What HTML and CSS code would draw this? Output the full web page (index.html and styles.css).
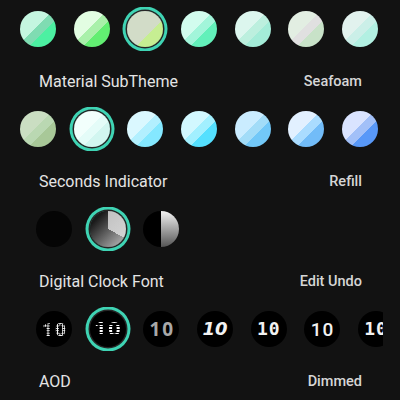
FILE: index.html
```html
<!DOCTYPE html>
<html lang="en">
<head>
    <meta charset="UTF-8">
    <meta name="viewport" content="width=device-width, initial-scale=1.0">
    <title>Watch Face Settings</title>
    <link rel="stylesheet" href="styles.css">
</head>
<body>

<div id="settings">
    <div class="section">
        <div class="swatches">
            <span class="swatch" style="--a:#c4f6e0;--b:#7fdcb2;--c:#4cf0a2"></span>
            <span class="swatch" style="--a:#e2fde2;--b:#a9f0aa;--c:#62ee72"></span>
            <span class="swatch selected" style="--a:#d2dcc8;--b:#d2dcc8;--c:#c6ee92"></span>
            <span class="swatch" style="--a:#d2fcee;--b:#a2f5da;--c:#62f0ba"></span>
            <span class="swatch" style="--a:#dcf6ee;--b:#bcefde;--c:#a4ecd8"></span>
            <span class="swatch" style="--a:#e2eee2;--b:#e0e0e0;--c:#c8e2c8"></span>
            <span class="swatch" style="--a:#e2f2ee;--b:#cbefe8;--c:#b2f0e2"></span>
        </div>
        <div class="row">
            <span class="label">Material SubTheme</span>
            <span class="value">Seafoam</span>
        </div>
    </div>

    <div class="section">
        <div class="swatches">
            <span class="swatch" style="--a:#cadec2;--b:#bad8b2;--c:#a8c898"></span>
            <span class="swatch selected" style="--a:#f2fffc;--b:#e4fcf8;--c:#d2f6f0"></span>
            <span class="swatch" style="--a:#daf8ff;--b:#b2f0ff;--c:#84e8ff"></span>
            <span class="swatch" style="--a:#d2f8ff;--b:#a2f0ff;--c:#54e0ff"></span>
            <span class="swatch" style="--a:#caecff;--b:#a2dcf8;--c:#72c8f8"></span>
            <span class="swatch" style="--a:#e2f0ff;--b:#aadcff;--c:#72bcf8"></span>
            <span class="swatch" style="--a:#dae4ff;--b:#a2c0f8;--c:#5898f8"></span>
        </div>
        <div class="row">
            <span class="label">Seconds Indicator</span>
            <span class="value">Refill</span>
        </div>
    </div>

    <div class="section">
        <div class="swatches inset">
            <span class="dial dial-none"></span>
            <span class="dial dial-sweep selected"></span>
            <span class="dial dial-half"></span>
        </div>
        <div class="row">
            <span class="label">Digital Clock Font</span>
            <span class="value">Edit Undo</span>
        </div>
    </div>

    <div class="section">
        <div class="swatches inset">
            <span class="dial"><b class="num num-dots">10</b></span>
            <span class="dial selected"><b class="num num-lines">10</b></span>
            <span class="dial"><b class="num num-grey">10</b></span>
            <span class="dial"><b class="num num-italic">10</b></span>
            <span class="dial"><b class="num num-mono">10</b></span>
            <span class="dial"><b class="num num-plain">10</b></span>
            <span class="dial"><b class="num num-mono">10</b></span>
        </div>
        <div class="row">
            <span class="label">AOD</span>
            <span class="value">Dimmed</span>
        </div>
    </div>
</div>

</body>
</html>
```

FILE: styles.css
```css
body {
    margin: 0;
    background-color: #121212;
    font-family: Roboto, "Noto Sans", sans-serif;
}

#settings {
    padding-top: 7px;
}

.section {
    height: 100px;
}

.swatches {
    display: flex;
    align-items: center;
    gap: 17.7px;
    height: 44px;
    padding-left: 20px;
    overflow: hidden;
}

.swatches.inset {
    padding-left: 36px;
    margin-right: 17px;
}

.swatch, .dial {
    flex: 0 0 36px;
    width: 36px;
    height: 36px;
    border-radius: 50%;
}

.swatch {
    background: linear-gradient(135deg, var(--a) 0 45%, var(--b) 45% 62%, var(--c) 62%);
}

.selected {
    box-shadow: 0 0 0 1.5px #262626, 0 0 0 4.5px #3fd4b4;
}

.dial {
    display: flex;
    align-items: center;
    justify-content: center;
    background-color: #000;
    overflow: hidden;
}

.dial-none {
    background-color: #050505;
}

.dial-sweep {
    background:
        conic-gradient(rgba(220, 220, 220, 0.85) 0 118deg, transparent 118deg),
        linear-gradient(135deg, #1a1a1a 20%, #c4c4c4 100%);
}

.dial-half {
    background:
        linear-gradient(90deg, #000 50%, transparent 50%),
        linear-gradient(180deg, #f2f2f2, #555);
}

.num {
    font-size: 18px;
    line-height: 1;
    color: #f2f2f2;
}

.num-dots {
    font-family: Roboto, sans-serif;
    font-weight: 900;
    font-size: 19px;
    letter-spacing: 2px;
    margin-left: 2px;
    background: radial-gradient(circle, #fff 0.8px, transparent 1.1px);
    background-size: 2.4px 2.4px;
    -webkit-background-clip: text;
    background-clip: text;
    color: transparent;
}

.num-lines {
    font-family: "Liberation Sans", sans-serif;
    font-weight: 700;
    font-size: 20px;
    letter-spacing: 1px;
    margin-left: 1px;
    transform: scaleX(1.15);
    background: repeating-linear-gradient(180deg, #fff 0 1.5px, transparent 1.5px 2.8px);
    -webkit-background-clip: text;
    background-clip: text;
    color: transparent;
}

.num-grey {
    font-family: "Open Sans", sans-serif;
    font-weight: 700;
    font-size: 19px;
    letter-spacing: 2px;
    margin-left: 2px;
    color: #a8a8a8;
}

.num-italic {
    font-family: "DejaVu Sans", sans-serif;
    font-weight: 700;
    font-style: italic;
    font-size: 18px;
}

.num-mono {
    font-family: "DejaVu Sans Mono", monospace;
    font-weight: 700;
    font-size: 18px;
    letter-spacing: 1px;
}

.num-plain {
    font-family: Roboto, sans-serif;
    font-weight: 500;
    font-size: 19px;
    letter-spacing: 1px;
}

.row {
    display: flex;
    justify-content: space-between;
    align-items: center;
    height: 20px;
    margin-top: 20px;
    padding: 0 38px 0 39px;
}

.label {
    font-size: 16px;
    color: #e4e4e4;
}

.value {
    font-size: 14.5px;
    font-weight: 500;
    color: #d6d6d6;
}
```
